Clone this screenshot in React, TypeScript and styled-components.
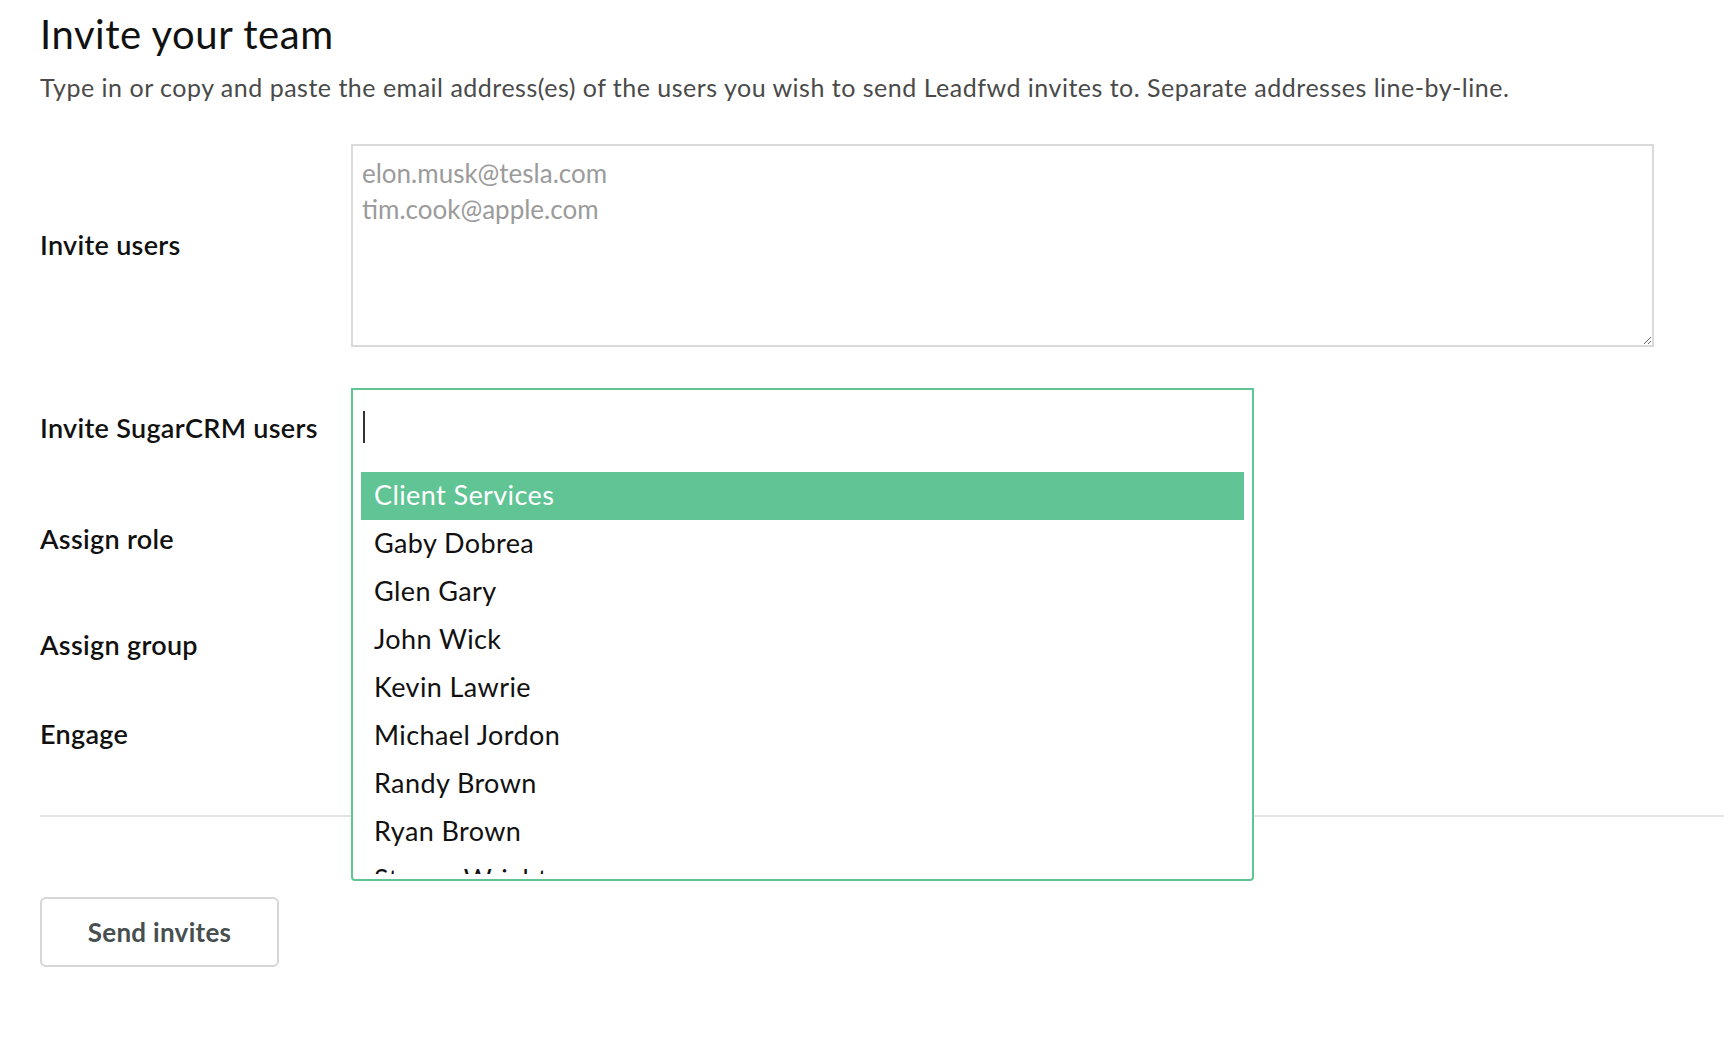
import React from 'react';
import styled, { createGlobalStyle } from 'styled-components';

const GlobalStyle = createGlobalStyle`
  html, body {
    margin: 0;
    padding: 0;
    background: #fff;
  }
  body {
    font-family: Lato, "Open Sans", "Liberation Sans", sans-serif;
    color: #111;
  }
`;

const SUGAR_USERS = [
  'Client Services',
  'Gaby Dobrea',
  'Glen Gary',
  'John Wick',
  'Kevin Lawrie',
  'Michael Jordon',
  'Randy Brown',
  'Ryan Brown',
  'Steven Wright',
];

/**
 * Invite team page.
 */
export default function App() {
  return (
    <>
      <GlobalStyle />
      <Page>
        <Title>Invite your team</Title>
        <Intro>
          Type in or copy and paste the email address(es) of the users you wish
          to send Leadfwd invites to. Separate addresses line-by-line.
        </Intro>

        <Form>
          <FormRow $height={203}>
            <Label>Invite users</Label>
            <EmailsArea
              placeholder={'elon.musk@tesla.com\ntim.cook@apple.com'}
            />
          </FormRow>

          <FormRow $height={80} $top={41}>
            <Label>Invite SugarCRM users</Label>
            <SelectRoot>
              <SelectMenu>
                <SelectInput>
                  <Caret />
                </SelectInput>
                <OptionList>
                  {SUGAR_USERS.map((name, i) => (
                    <OptionItem key={name} $active={i === 0}>
                      {name}
                    </OptionItem>
                  ))}
                </OptionList>
              </SelectMenu>
            </SelectRoot>
          </FormRow>

          <FormRow $height={142}>
            <Label>Assign role</Label>
          </FormRow>
          <FormRow $height={70}>
            <Label>Assign group</Label>
          </FormRow>
          <FormRow $height={109}>
            <Label>Engage</Label>
          </FormRow>
        </Form>

        <Divider />

        <SendButton type="button">Send invites</SendButton>
      </Page>
    </>
  );
}

const Page = styled.div`
  padding: 10px 0 60px 40px;
`;

const Title = styled.h1`
  margin: 0;
  font-size: 40px;
  line-height: 1.2;
  font-weight: 400;
  letter-spacing: 0.55px;
  color: #111;
`;

const Intro = styled.p`
  margin: 14px 0 0;
  font-size: 25px;
  line-height: 1.2;
  letter-spacing: 0.5px;
  color: #4a4a4a;
`;

const Form = styled.div`
  display: flex;
  flex-direction: column;
  margin-top: 42px;
`;

const FormRow = styled.div<{ $height: number; $top?: number }>`
  display: flex;
  align-items: center;
  height: ${(p) => p.$height}px;
  margin-top: ${(p) => p.$top || 0}px;
`;

const Label = styled.div`
  flex: 0 0 311px;
  font-size: 27px;
  font-weight: 600;
  line-height: 1.2;
  letter-spacing: 0.3px;
  color: #111;
`;

const EmailsArea = styled.textarea`
  box-sizing: border-box;
  width: 1303px;
  height: 100%;
  border: 2px solid #dadada;
  border-radius: 0;
  padding: 9px 9px;
  font-family: Lato, "Open Sans", sans-serif;
  font-size: 26px;
  line-height: 36px;
  letter-spacing: 0;
  color: #222;
  outline: none;
  resize: vertical;

  &::placeholder {
    color: #9b9b9b;
  }
`;

const SelectRoot = styled.div`
  position: relative;
  width: 903px;
  height: 100%;
`;

const SelectMenu = styled.div`
  position: absolute;
  top: 0;
  left: 0;
  z-index: 10;
  box-sizing: border-box;
  width: 100%;
  height: 493px;
  display: flex;
  flex-direction: column;
  padding-bottom: 5px;
  border: 2px solid #60c495;
  border-radius: 0 0 4px 4px;
  background: #fff;
`;

const SelectInput = styled.div`
  flex: 0 0 74px;
  display: flex;
  align-items: center;
  padding-left: 10px;
`;

const Caret = styled.span`
  display: block;
  width: 2px;
  height: 32px;
  background: #333;
`;

const OptionList = styled.ul`
  flex: 1;
  margin: 0;
  padding: 8px 8px 0;
  list-style: none;
  overflow: hidden;
`;

const OptionItem = styled.li<{ $active?: boolean }>`
  box-sizing: border-box;
  height: 48px;
  display: flex;
  align-items: center;
  padding: 0 0 3px 13px;
  font-size: 27px;
  letter-spacing: 0.4px;
  color: ${(p) => (p.$active ? '#fff' : '#111')};
  background: ${(p) => (p.$active ? '#60c495' : 'transparent')};
`;

const Divider = styled.hr`
  margin: 26px 0 0;
  border: 0;
  height: 2px;
  background: #e4e4e4;
`;

const SendButton = styled.button`
  display: block;
  box-sizing: border-box;
  margin-top: 80px;
  width: 239px;
  height: 70px;
  border: 2px solid #d6d6d6;
  border-radius: 6px;
  background: #fff;
  font-family: Lato, "Open Sans", sans-serif;
  font-size: 26px;
  font-weight: 700;
  letter-spacing: 0.3px;
  color: #474f4f;
  cursor: pointer;
`;
